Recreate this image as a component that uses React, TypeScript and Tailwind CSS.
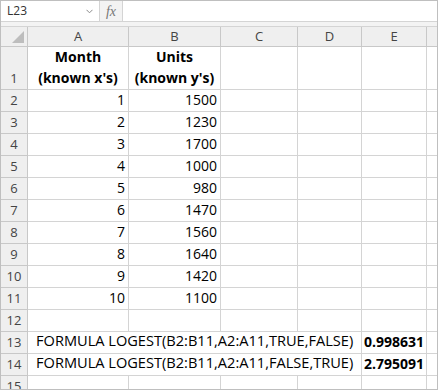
const cols = ["A", "B", "C", "D", "E", ""];
const colW = ["w-[101px]", "w-[92px]", "w-[77px]", "w-[64px]", "w-[65px]", "flex-1"];

const data: [number, number][] = [
  [1, 1500],
  [2, 1230],
  [3, 1700],
  [4, 1000],
  [5, 980],
  [6, 1470],
  [7, 1560],
  [8, 1640],
  [9, 1420],
  [10, 1100],
];

const line = "border-[#d4d4d4]";

function RowHead({ n, h }: { n: number | string; h: string }) {
  return (
    <div
      className={`w-[27px] shrink-0 ${h} flex items-end justify-center border-r border-b border-[#c8c8c8] bg-[#efefef] pb-[1px] text-[13px] text-[#444]`}
    >
      {n}
    </div>
  );
}

function Cell({
  w,
  children,
  className = "",
}: {
  w: string;
  children?: React.ReactNode;
  className?: string;
}) {
  return (
    <div className={`${w} shrink-0 border-r border-b ${line} ${className}`}>
      {children}
    </div>
  );
}

function Row({ n, children }: { n: number; children?: React.ReactNode[] }) {
  return (
    <div className="flex h-[22px]">
      <RowHead n={n} h="h-[22px]" />
      {colW.map((w, i) => (
        <Cell
          key={i}
          w={w}
          className={`flex items-end justify-end pr-[3px] pb-[1px] ${i === 5 ? "border-r-0" : ""}`}
        >
          {children?.[i]}
        </Cell>
      ))}
    </div>
  );
}

function FormulaRow({ n, text, value }: { n: number; text: string; value: string }) {
  return (
    <div className="flex h-[22px]">
      <RowHead n={n} h="h-[22px]" />
      <div
        className={`w-[334px] shrink-0 border-r border-b ${line} flex items-end whitespace-nowrap pl-[8px] pb-[1px] text-[14.6px]`}
      >
        {text}
      </div>
      <Cell w="w-[65px]" className="flex items-end pl-[2px] pb-[1px] font-bold">
        {value}
      </Cell>
      <div className={`flex-1 border-b ${line}`} />
    </div>
  );
}

export default function App() {
  return (
    <div
      className="h-[390px] w-[438px] overflow-hidden border border-[#bfbfbf] bg-white text-[14px] text-black"
      style={{ fontFamily: '"Open Sans", "Noto Sans", sans-serif' }}
    >
      {/* formula bar */}
      <div className="flex h-[21px] border-b border-[#d4d4d4]">
        <div className="flex w-[99px] items-center justify-between border-r border-[#d4d4d4] pl-[6px] pr-[6px] text-[12px] text-[#333]">
          <span>L23</span>
          <svg width="7" height="5" viewBox="0 0 7 5" className="mt-[1px]">
            <path d="M0.5 0.8 L3.5 3.8 L6.5 0.8" fill="none" stroke="#8a8a8a" strokeWidth="1" />
          </svg>
        </div>
        <div className="flex w-[23px] items-center justify-center border-r border-[#d4d4d4] bg-[#f3f3f3]">
          <span
            className="text-[14px] italic text-[#777]"
            style={{ fontFamily: '"Liberation Serif", serif' }}
          >
            fx
          </span>
        </div>
        <div className="flex-1" />
      </div>
      <div className="h-[5px] border-b border-[#d4d4d4] bg-[#f3f3f3]" />

      {/* column header */}
      <div className="flex h-[20px] border-b border-[#c8c8c8] bg-[#efefef] text-[13px] text-[#444]">
        <div className="relative w-[27px] shrink-0 border-r border-[#c8c8c8]">
          <svg width="12" height="12" className="absolute bottom-[3px] right-[3px]">
            <polygon points="12,0 12,12 0,12" fill="#bdbdbd" />
          </svg>
        </div>
        {cols.map((c, i) => (
          <div
            key={i}
            className={`${colW[i]} shrink-0 flex items-center justify-center ${i === 5 ? "" : "border-r border-[#c8c8c8]"}`}
          >
            {c}
          </div>
        ))}
      </div>

      {/* row 1 */}
      <div className="flex h-[43px]">
        <RowHead n={1} h="h-[43px]" />
        <Cell w="w-[101px]" className="flex flex-col items-center justify-end pb-[1px] font-bold leading-[21px]">
          <span>Month</span>
          <span>(known x's)</span>
        </Cell>
        <Cell w="w-[92px]" className="flex flex-col items-center justify-end pb-[1px] font-bold leading-[21px]">
          <span>Units</span>
          <span>(known y's)</span>
        </Cell>
        <Cell w="w-[77px]" />
        <Cell w="w-[64px]" />
        <Cell w="w-[65px]" />
        <div className={`flex-1 border-b ${line}`} />
      </div>

      {data.map(([m, u], i) => (
        <Row key={i} n={i + 2}>
          {[m, u]}
        </Row>
      ))}
      <Row n={12} />
      <FormulaRow n={13} text="FORMULA LOGEST(B2:B11,A2:A11,TRUE,FALSE)" value="0.998631" />
      <FormulaRow n={14} text="FORMULA LOGEST(B2:B11,A2:A11,FALSE,TRUE)" value="2.795091" />
      <Row n={15} />
    </div>
  );
}
